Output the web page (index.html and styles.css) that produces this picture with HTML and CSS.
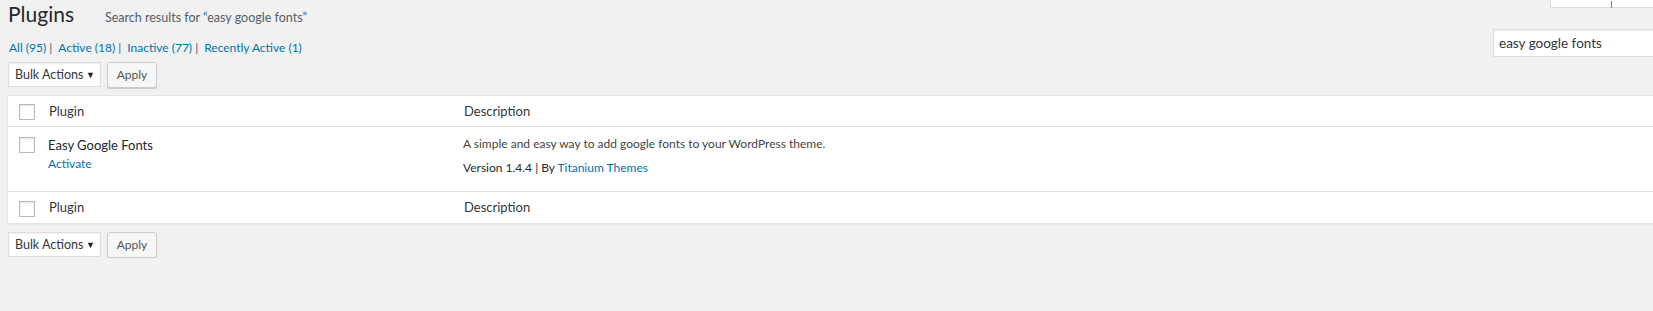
FILE: index.html
```html
<!DOCTYPE html>
<html lang="en">
<head>
    <meta charset="UTF-8">
    <title>Plugins</title>
    <link rel="stylesheet" href="styles.css">
</head>
<body>
    <!-- Help tab peeking in at the top right -->
    <div class="screen-meta"><span class="meta-mark"></span></div>

    <div class="wrap">
        <h1 class="page-title">Plugins <span class="subtitle">Search results for “easy google fonts”</span></h1>

        <div class="top-row">
            <ul class="subsubsub">
                <li><a href="#">All <span class="count">(95)</span></a> <span class="sep">|</span></li>
                <li><a href="#">Active <span class="count">(18)</span></a> <span class="sep">|</span></li>
                <li><a href="#">Inactive <span class="count">(77)</span></a> <span class="sep">|</span></li>
                <li><a href="#">Recently Active <span class="count">(1)</span></a></li>
            </ul>
            <input class="search-box" type="search" value="easy google fonts">
        </div>

        <div class="tablenav">
            <div class="select">Bulk Actions <span class="arrow">▼</span></div>
            <button class="button">Apply</button>
        </div>

        <table class="plugins">
            <colgroup>
                <col class="col-check">
                <col class="col-name">
                <col>
            </colgroup>
            <thead>
                <tr>
                    <td class="check-col"><span class="checkbox"></span></td>
                    <th class="name-col">Plugin</th>
                    <th class="desc-col">Description</th>
                </tr>
            </thead>
            <tbody>
                <tr>
                    <td class="check-col"><span class="checkbox"></span></td>
                    <td class="name-col">
                        <div class="plugin-title">Easy Google Fonts</div>
                        <a class="action" href="#">Activate</a>
                    </td>
                    <td class="desc-col">
                        <p class="desc">A simple and easy way to add google fonts to your WordPress theme.</p>
                        <p class="version">Version 1.4.4 | By <a href="#">Titanium Themes</a></p>
                    </td>
                </tr>
            </tbody>
            <tfoot>
                <tr>
                    <td class="check-col"><span class="checkbox"></span></td>
                    <th class="name-col">Plugin</th>
                    <th class="desc-col">Description</th>
                </tr>
            </tfoot>
        </table>

        <div class="tablenav bottom">
            <div class="select">Bulk Actions <span class="arrow">▼</span></div>
            <button class="button">Apply</button>
        </div>
    </div>
</body>
</html>
```

FILE: styles.css
```css
body {
    margin: 0;
    background: #f1f1f1;
    color: #444;
    font-family: Lato, "Open Sans", sans-serif;
    font-size: 12px;
    overflow: hidden;
    position: relative;
}
a {
    color: #0073aa;
    text-decoration: none;
}

/* Help tab, mostly above the window */
.screen-meta {
    position: absolute;
    top: -20px;
    left: 1550px;
    width: 120px;
    height: 28px;
    background: #fff;
    border: 1px solid #ddd;
    box-sizing: border-box;
}
.meta-mark {
    position: absolute;
    left: 60px;
    top: 20px;
    width: 1px;
    height: 7px;
    background: #3d8fbf;
}

.wrap {
    padding-left: 7px;
}
.page-title {
    display: flex;
    align-items: baseline;
    margin: 0;
    padding-left: 1px;
    height: 27px;
    font-size: 21px;
    font-weight: 400;
    line-height: 27px;
    color: #23282d;
}
.subtitle {
    margin-left: 31px;
    font-size: 12.5px;
    color: #555d66;
}

.top-row {
    display: flex;
    justify-content: space-between;
    align-items: flex-end;
    margin-top: 2px;
}
.subsubsub {
    list-style: none;
    margin: 0;
    padding: 0 0 0 2px;
    display: flex;
    gap: 6px;
    line-height: 18px;
    white-space: nowrap;
}
.subsubsub .sep {
    color: #555;
}
.search-box {
    width: 170px;
    height: 28px;
    margin-right: -10px;
    box-sizing: border-box;
    border: 1px solid #ddd;
    box-shadow: inset 0 1px 2px rgba(0, 0, 0, 0.07);
    background: #fff;
    padding: 0 5px;
    font-family: inherit;
    font-size: 13.5px;
    color: #32373c;
    outline: none;
}

.tablenav {
    display: flex;
    gap: 6px;
    margin-top: 5px;
    padding-left: 1px;
    height: 26px;
}
.tablenav.bottom {
    margin-top: 8px;
}
.select {
    width: 93px;
    height: 25px;
    box-sizing: border-box;
    border: 1px solid #ddd;
    background: #fff;
    box-shadow: inset 0 1px 2px rgba(0, 0, 0, 0.07);
    display: flex;
    align-items: center;
    justify-content: space-between;
    padding: 0 5px 0 6px;
    font-size: 12.5px;
    line-height: 18px;
    color: #32373c;
    white-space: nowrap;
}
.select .arrow {
    font-size: 9px;
    color: #222;
}
.button {
    width: 50px;
    height: 26px;
    padding: 0;
    border: 1px solid #ccc;
    border-radius: 3px;
    background: #f7f7f7;
    box-shadow: 0 1px 0 #ccc;
    font-family: inherit;
    font-size: 12px;
    line-height: 18px;
    color: #555;
}

/* Plugin list table */
.plugins {
    width: calc(100% + 10px);
    margin-top: 7px;
    table-layout: fixed;
    border-collapse: separate;
    border-spacing: 0;
    background: #fff;
    border: 1px solid #e5e5e5;
    box-shadow: 0 1px 1px rgba(0, 0, 0, 0.04);
}
.col-check {
    width: 33px;
}
.col-name {
    width: 412px;
}
.plugins th,
.plugins td {
    text-align: left;
    vertical-align: top;
    padding: 0;
    line-height: 18px;
}
.plugins thead th,
.plugins tfoot th {
    font-weight: 400;
    font-size: 13px;
    color: #32373c;
    padding-top: 6px;
    padding-bottom: 6px;
}
.plugins tfoot th {
    padding-bottom: 7px;
}
.plugins thead td,
.plugins thead th,
.plugins tbody td {
    border-bottom: 1px solid #e1e1e1;
}
.plugins th.name-col {
    padding-left: 8px;
}
.plugins th.desc-col {
    padding-left: 11px;
}
.check-col {
    padding-left: 11px !important;
    line-height: 0 !important;
}
.plugins thead .check-col {
    padding-top: 8px;
}
.plugins tbody .check-col {
    padding-top: 10px;
}
.plugins tfoot .check-col {
    padding-top: 9px;
}
.checkbox {
    display: block;
    width: 16px;
    height: 16px;
    box-sizing: border-box;
    border: 1px solid #b4b9be;
    background: #fff;
    box-shadow: inset 0 1px 2px rgba(0, 0, 0, 0.1);
}
.plugins tbody td.name-col {
    padding: 9px 0 0 7px;
}
.plugin-title {
    font-size: 13px;
    color: #23282d;
}
.action {
    display: block;
    margin-top: 1px;
}
.plugins tbody td.desc-col {
    padding: 8px 0 14px 10px;
}
.desc {
    margin: 0;
    color: #444;
}
.version {
    margin: 6px 0 0;
    color: #23282d;
}
```
